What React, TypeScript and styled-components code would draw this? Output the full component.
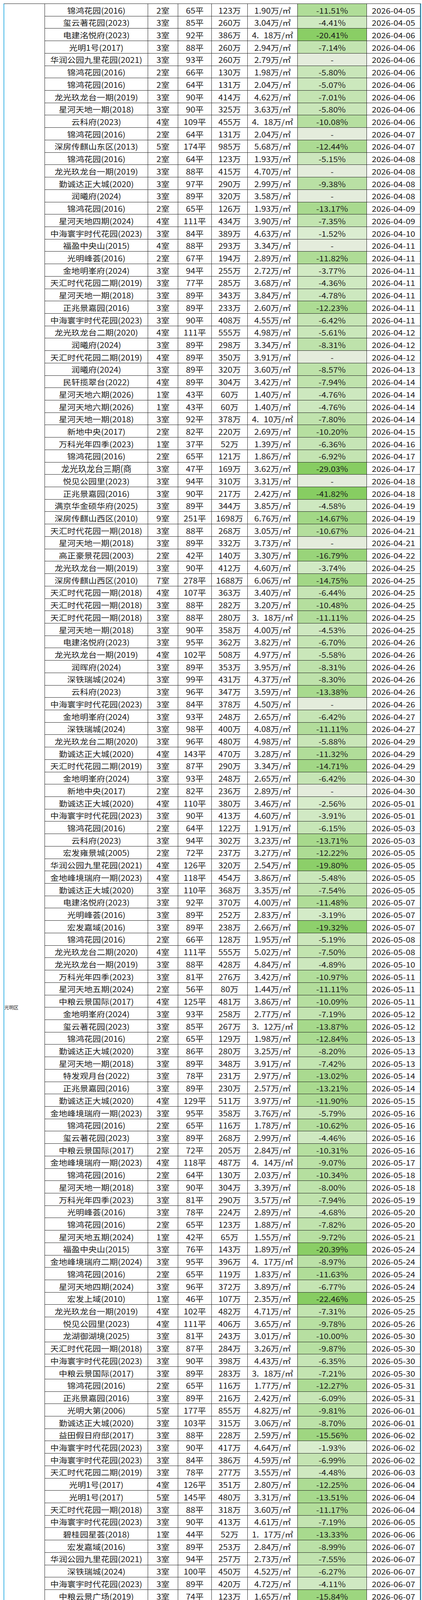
import React from 'react';
import styled, { createGlobalStyle, css } from 'styled-components';

const RAW = `锦鸿花园(2016),2,65,123,1.90,-11.51,04-05
玺云著花园(2023),3,85,260,3.04,-4.41,04-05
电建洺悦府(2023),3,92,386,4.18,-20.41,04-06
光明1号(2017),3,88,260,2.94,-7.14,04-06
华润公园九里花园(2021),3,93,260,2.79,,04-06
锦鸿花园(2016),2,66,130,1.98,-5.80,04-06
锦鸿花园(2016),2,64,131,2.04,-5.07,04-06
龙光玖龙台一期(2019),3,90,414,4.62,-7.01,04-06
星河天地一期(2018),3,90,325,3.63,-5.80,04-06
云科府(2023),4,109,455,4.18,-10.08,04-06
锦鸿花园(2016),2,64,131,2.04,,04-07
深房传麒山东区(2013),5,174,985,5.68,-12.44,04-07
锦鸿花园(2016),2,64,123,1.93,-5.15,04-08
龙光玖龙台一期(2019),3,88,415,4.70,,04-08
勤诚达正大城(2020),3,97,290,2.99,-9.38,04-08
润曦府(2024),3,89,320,3.58,,04-08
锦鸿花园(2016),2,65,126,1.93,-13.17,04-09
星河天地四期(2024),4,111,434,3.90,-7.35,04-09
中海寰宇时代花园(2023),3,84,389,4.63,-1.52,04-10
福盈中央山(2015),4,88,293,3.34,,04-11
光明峰荟(2016),2,67,194,2.89,-11.82,04-11
金地明峯府(2024),3,94,255,2.72,-3.77,04-11
天汇时代花园二期(2019),3,77,285,3.68,-4.36,04-11
星河天地一期(2018),3,89,343,3.84,-4.78,04-11
正兆景嘉园(2016),3,89,233,2.60,-12.23,04-11
中海寰宇时代花园(2023),3,90,408,4.55,-6.42,04-11
龙光玖龙台二期(2020),4,111,555,4.98,-5.61,04-12
润曦府(2024),3,89,298,3.34,-8.31,04-12
天汇时代花园二期(2019),4,89,350,3.91,,04-12
润曦府(2024),3,89,320,3.60,-8.57,04-13
民轩揽翠台(2022),4,89,304,3.42,-7.94,04-14
星河天地六期(2026),1,43,60,1.40,-4.76,04-14
星河天地六期(2026),1,43,60,1.40,-4.76,04-14
星河天地一期(2018),3,92,378,4.10,-7.80,04-14
新地中央(2017),2,82,220,2.69,-10.20,04-15
万科光年四季(2023),1,37,52,1.39,-6.36,04-16
锦鸿花园(2016),2,65,121,1.86,-6.92,04-17
龙光玖龙台三期(商|务公寓),3,47,169,3.62,-29.03,04-17
悦见公园里(2023),3,94,310,3.31,,04-18
正兆景嘉园(2016),3,90,217,2.42,-41.82,04-18
满京华金硕华府(2025),3,89,344,3.85,-4.58,04-19
深房传麒山西区(2010),9,251,1698,6.76,-14.67,04-19
天汇时代花园一期(2018),3,88,268,3.05,-10.67,04-21
星河天地一期(2018),3,89,332,3.73,,04-21
高正豪景花园(2003),2,42,140,3.30,-16.79,04-22
龙光玖龙台一期(2019),3,90,412,4.60,-3.74,04-25
深房传麒山西区(2010),7,278,1688,6.06,-14.75,04-25
天汇时代花园一期(2018),4,107,363,3.40,-6.44,04-25
天汇时代花园一期(2018),3,88,282,3.20,-10.48,04-25
天汇时代花园一期(2018),3,88,280,3.18,-11.11,04-25
星河天地一期(2018),3,90,358,4.00,-4.53,04-25
电建洺悦府(2023),3,95,362,3.82,-6.70,04-26
龙光玖龙台一期(2019),4,102,508,4.97,-5.58,04-26
润晖府(2024),3,89,353,3.95,-8.31,04-26
深铁瑞城(2024),3,99,431,4.37,-8.30,04-26
云科府(2023),3,96,347,3.59,-13.38,04-26
中海寰宇时代花园(2023),3,84,378,4.50,,04-26
金地明峯府(2024),3,93,248,2.65,-6.42,04-27
深铁瑞城(2024),3,98,400,4.08,-11.11,04-27
龙光玖龙台二期(2020),3,96,480,4.98,-5.88,04-29
勤诚达正大城(2020),4,143,470,3.28,-11.32,04-29
天汇时代花园二期(2019),3,87,290,3.34,-14.71,04-29
金地明峯府(2024),3,93,248,2.65,-6.42,04-30
新地中央(2017),2,82,236,2.89,,04-30
勤诚达正大城(2020),4,110,380,3.46,-2.56,05-01
中海寰宇时代花园(2023),3,90,413,4.60,-3.91,05-01
锦鸿花园(2016),2,64,122,1.91,-6.15,05-03
云科府(2023),3,94,302,3.23,-13.71,05-03
宏发雍景城(2005),2,72,237,3.27,-12.22,05-05
华润公园九里花园(2021),4,126,320,2.54,-19.80,05-05
金地峰境瑞府一期(2023),4,118,454,3.86,-5.48,05-05
勤诚达正大城(2020),3,110,368,3.35,-7.54,05-05
电建洺悦府(2023),3,92,370,4.00,-11.48,05-07
光明峰荟(2016),3,89,252,2.83,-3.19,05-07
宏发嘉域(2016),3,89,238,2.66,-19.32,05-07
锦鸿花园(2016),2,66,128,1.95,-5.19,05-08
龙光玖龙台二期(2020),4,111,555,5.02,-7.50,05-08
龙光玖龙台一期(2019),3,88,428,4.84,-4.89,05-10
万科光年四季(2023),3,81,276,3.42,-10.97,05-11
星河天地五期(2024),2,56,80,1.44,-11.11,05-11
中粮云景国际(2017),4,125,481,3.86,-10.09,05-11
金地明峯府(2024),3,93,258,2.77,-7.19,05-12
玺云著花园(2023),3,85,267,3.12,-13.87,05-12
锦鸿花园(2016),2,65,129,1.98,-12.84,05-13
勤诚达正大城(2020),3,86,280,3.25,-8.20,05-13
星河天地一期(2018),3,89,348,3.91,-7.42,05-13
特发观月台(2022),3,78,231,2.97,-13.02,05-14
正兆景嘉园(2016),3,89,230,2.57,-13.21,05-14
勤诚达正大城(2020),4,129,511,3.97,-11.90,05-15
金地峰境瑞府一期(2023),3,95,358,3.76,-5.79,05-16
锦鸿花园(2016),2,65,116,1.78,-10.62,05-16
玺云著花园(2023),3,89,268,2.99,-4.46,05-16
中粮云景国际(2017),2,72,205,2.84,-10.31,05-16
金地峰境瑞府一期(2023),4,118,487,4.14,-9.07,05-17
锦鸿花园(2016),2,64,130,2.03,-10.34,05-18
星河天地一期(2018),3,90,304,3.39,-8.00,05-18
万科光年四季(2023),3,81,290,3.57,-7.94,05-19
光明峰荟(2016),3,78,224,2.89,-4.68,05-20
锦鸿花园(2016),2,65,123,1.88,-7.82,05-20
星河天地五期(2024),1,42,65,1.55,-9.72,05-21
福盈中央山(2015),3,76,143,1.89,-20.39,05-24
金地峰境瑞府二期(2024),3,95,396,4.17,-8.97,05-24
锦鸿花园(2016),2,65,119,1.83,-11.63,05-24
星河天地四期(2024),3,96,372,3.89,-6.77,05-24
宏发上域(2010),1,46,107,2.35,-22.46,05-25
龙光玖龙台一期(2019),4,102,482,4.71,-7.31,05-25
悦见公园里(2023),4,111,406,3.65,-9.78,05-26
龙湖御湖境(2025),3,81,243,3.01,-10.00,05-30
天汇时代花园一期(2018),3,87,284,3.26,-9.87,05-30
中海寰宇时代花园(2023),3,90,398,4.43,-6.35,05-30
中粮云景国际(2017),3,89,283,3.18,-7.21,05-30
锦鸿花园(2016),2,65,116,1.77,-12.27,05-31
正兆景嘉园(2016),3,89,216,2.42,-6.09,05-31
光明大第(2006),5,177,855,4.82,-9.81,06-01
勤诚达正大城(2020),3,103,315,3.06,-8.70,06-01
益田假日府邸(2017),3,88,228,2.59,-15.56,06-02
中海寰宇时代花园(2023),3,90,417,4.64,-1.93,06-02
中海寰宇时代花园(2023),3,84,386,4.59,-6.99,06-02
天汇时代花园二期(2019),3,78,277,3.55,-4.48,06-03
光明1号(2017),4,126,351,2.80,-12.25,06-04
光明1号(2017),5,145,480,3.31,-13.51,06-04
天汇时代花园一期(2018),3,88,318,3.60,-11.17,06-04
中海寰宇时代花园(2023),3,90,413,4.61,-7.19,06-05
碧桂园星荟(2018),1,44,52,1.17,-13.33,06-06
宏发嘉域(2016),3,89,253,2.84,-8.99,06-07
华润公园九里花园(2021),3,94,257,2.73,-7.55,06-07
深铁瑞城(2024),3,100,450,4.52,-6.27,06-07
中海寰宇时代花园(2023),3,89,420,4.72,-4.11,06-07
中粮云景广场(2019),3,74,123,1.65,-15.84,06-07
电建洺悦府(2023),3,92,352,3.81,-9.74,06-09
锦鸿花园(2016),2,65,131,2.01,-5.43,06-09
天汇时代花园一期(2018),3,88,291,3.29,-16.86,06-09
星河天地六期(2026),1,43,62,1.44,-20.51,06-09
万科光年四季(2023),3,81,268,3.32,-6.94,06-10
悦见公园里(2023),3,85,257,3.03,-6.88,06-10
万科光年四季(2023),1,37,42,1.13,-44.00,06-11
万科光年四季(2023),1,37,50,1.35,-33.33,06-11
金地峰境瑞府一期(2023),3,95,370,3.88,-9.31,06-12
龙光玖龙台一期(2019),4,104,487,4.69,-6.29,06-12
电建洺悦鹏著花园(2023),3,88,304,3.46,-7.88,06-13
勤诚达正大城(2020),3,97,298,3.09,-13.62,06-15
润晖府(2024),3,89,358,4.01,-7.73,06-15
金地峰境瑞府一期(2023),4,116,491,4.22,-7.36,06-17,*
乐府广场(2020),1,48,99,2.06,-15.09,06-17
龙光玖龙台一期(2019),4,104,488,4.70,-6.15,06-17
宏发上域(2010),1,45,120,2.65,-13.04,06-19
安联尚璟府,3,89,320,3.58,-3.03,06-20
光明峰荟(2016),4,88,280,3.20,-14.11,06-21
光明峰荟(2016),3,89,259,2.90,-13.26,06-23
中粮云景国际(2017),3,89,318,3.57,-6.19,06-23
中海时光境花园(2024),3,90,290,3.24,-13.43,06-24
中粮云景国际(2017),3,89,299,3.36,-9.39,06-26
电建洺悦府(2023),4,109,507,4.65,-4.34,06-27
和润家园(2009),2,59,200,3.37,-12.28,06-27
福盈中央山(2015),3,74,146,1.98,-2.40,06-28,*
光明1号(2017),1,47,45,0.95,-23.73,06-28
深房传麒山东区(2013),5,302,1550,5.14,-17.02,06-28
深铁瑞城(2024),3,98,432,4.41,-9.67,06-28
勤诚达正大城(2020),4,106,391,3.69,-7.02,06-29
万科光年四季(2023),1,37,52,1.40,-7.14,06-30
锦鸿花园(2016),2,64,120,1.87,-11.84,06-25,*
万科光年四季(2023),1,37,50,1.35,-28.57,06-29,*`;

type Listing = {
  name: string[];
  rooms: string;
  area: string;
  price: string;
  unit: string;
  change: number | null;
  date: string;
  flagged: boolean;
};

const LISTINGS: Listing[] = RAW.trim()
  .split('\n')
  .map((line) => {
    const [name, rooms, area, price, unit, change, date, flag] = line.trim().split(',');
    return {
      name: name.split('|'),
      rooms,
      area,
      price,
      unit,
      change: change === '' ? null : parseFloat(change),
      date,
      flagged: flag === '*',
    };
  });

const formatUnit = (u: string) => {
  const [a, b] = u.split('.');
  return b.startsWith('1') ? `${a}.\u2007${b}万/㎡` : `${a}.${b}万/㎡`;
};

const formatChange = (v: number | null) => (v === null ? '-' : `${v.toFixed(2)}%`);

const toneFor = (v: number | null) => {
  if (v === null) return '#e4ecdc';
  const t = Math.min(1, Math.abs(v) / 21);
  const from = [226, 240, 218];
  const to = [135, 205, 98];
  const c = from.map((x, i) => Math.round(x + (to[i] - x) * t));
  return `rgb(${c[0]}, ${c[1]}, ${c[2]})`;
};

const GlobalStyle = createGlobalStyle`
  *, *::before, *::after {
    box-sizing: border-box;
  }
  html, body {
    margin: 0;
    padding: 0;
    background: #ffffff;
  }
  body {
    font-family: "Noto Sans CJK SC", "Noto Sans", sans-serif;
    color: #1c1c1c;
  }
`;

const Page = styled.main`
  padding: 9px 0 0 9px;
`;

const Sheet = styled.section`
  display: flex;
  align-items: stretch;
  width: 1069px;
  border-left: 2px solid #41b6e6;
  border-right: 2px solid #41b6e6;
  border-bottom: 2px solid #41b6e6;
  border-top: 1px solid #222222;
  font-size: 21.6px;
  font-variant-numeric: tabular-nums;
`;

const District = styled.div`
  flex: 0 0 103px;
  display: flex;
  align-items: center;
  justify-content: flex-start;
  font-size: 12px;
  line-height: 1;
`;

const Body = styled.div`
  flex: 0 0 962px;
  display: flex;
  flex-direction: column;
`;

const Row = styled.div`
  flex: none;
  height: 31.72px;
  display: grid;
  grid-template-columns: 264px 77px 86px 92px 128px 177px 138px;
  grid-template-rows: 100%;
`;

const Cell = styled.div<{ $last?: boolean }>`
  display: flex;
  align-items: center;
  justify-content: center;
  min-width: 0;
  min-height: 0;
  height: 100%;
  border-left: 1px solid #222222;
  border-bottom: 1px solid #222222;
  ${(p) => p.$last && 'border-right: 1px solid #222222;'}
  white-space: nowrap;
  overflow: hidden;
  line-height: 1;
  background: #ffffff;
`;

const WrapCell = styled(Cell)`
  align-items: flex-start;
  padding-top: 3px;
  line-height: 23px;
  white-space: normal;
  text-align: center;
`;

const ChangeCell = styled(Cell)<{ $tone: string; $flagged: boolean }>`
  position: relative;
  background: ${(p) => p.$tone};
  ${(p) =>
    p.$flagged &&
    css`
      &::before {
        content: '';
        position: absolute;
        top: 0;
        left: 0;
        width: 0;
        height: 0;
        border-top: 5px solid #1f7a32;
        border-right: 5px solid transparent;
      }
    `}
`;

const Text = styled.span`
  display: inline-block;
  line-height: 1;
  transform: translateY(1px) scaleY(0.9);
`;

const Lines = styled.span`
  display: block;
`;

export default function App() {
  return (
    <>
      <GlobalStyle />
      <Page>
        <Sheet>
          <District>光明区</District>
          <Body>
            {LISTINGS.map((r, i) => (
              <Row key={i}>
                {r.name.length > 1 ? (
                  <WrapCell>
                    <Lines>
                      {r.name.map((part, j) => (
                        <Lines key={j}>{part}</Lines>
                      ))}
                    </Lines>
                  </WrapCell>
                ) : (
                  <Cell>
                    <Text>{r.name[0]}</Text>
                  </Cell>
                )}
                <Cell>
                  <Text>{r.rooms}室</Text>
                </Cell>
                <Cell>
                  <Text>{r.area}平</Text>
                </Cell>
                <Cell>
                  <Text>{r.price}万</Text>
                </Cell>
                <Cell>
                  <Text>{formatUnit(r.unit)}</Text>
                </Cell>
                <ChangeCell $tone={toneFor(r.change)} $flagged={r.flagged}>
                  <Text>{formatChange(r.change)}</Text>
                </ChangeCell>
                <Cell $last>
                  <Text>2026-{r.date}</Text>
                </Cell>
              </Row>
            ))}
          </Body>
        </Sheet>
      </Page>
    </>
  );
}
